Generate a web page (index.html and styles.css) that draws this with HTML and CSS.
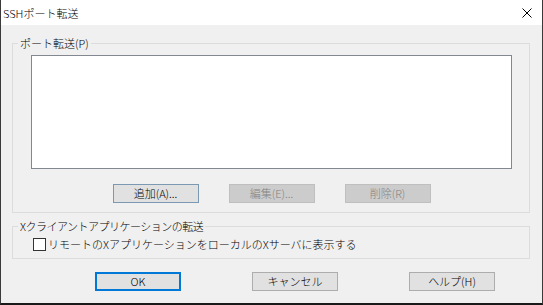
FILE: index.html
```html
<!DOCTYPE html>
<html lang="ja">
<head>
    <meta charset="UTF-8">
    <title>SSHポート転送</title>
    <link rel="stylesheet" href="styles.css">
</head>
<body>
    <div class="window">
        <div class="title-bar">
            <span class="title">SSHポート転送</span>
            <svg class="close" width="10" height="10" viewBox="0 0 10 10">
                <path d="M0.5 0.5 L9.5 9.5 M9.5 0.5 L0.5 9.5" stroke="#000" stroke-width="1" fill="none"/>
            </svg>
        </div>

        <div class="content">
            <div class="group forward-group">
                <span class="group-title">ポート転送(P)</span>
                <div class="list-box"></div>
                <div class="list-buttons">
                    <button class="button focused">追加(A)...</button>
                    <button class="button" disabled>編集(E)...</button>
                    <button class="button" disabled>削除(R)</button>
                </div>
            </div>

            <div class="group x-group">
                <span class="group-title">Xクライアントアプリケーションの転送</span>
                <label class="check-row">
                    <span class="check-box"></span>
                    <span class="check-text">リモートのXアプリケーションをローカルのXサーバに表示する</span>
                </label>
            </div>

            <div class="dialog-buttons">
                <button class="button default">OK</button>
                <button class="button">キャンセル</button>
                <button class="button">ヘルプ(H)</button>
            </div>
        </div>
    </div>
</body>
</html>
```

FILE: styles.css
```css
body {
    margin: 0;
    font-family: "Noto Sans CJK JP", "Noto Sans", sans-serif;
    font-size: 11px;
    font-weight: 300;
    color: #000;
    background-color: #f0f0f0;
}

.window {
    width: 543px;
    height: 305px;
    box-sizing: border-box;
    border-left: 1px solid #3a3a3a;
    border-right: 1px solid #3a3a3a;
    border-bottom: 2px solid #1a1a1a;
    background-color: #f0f0f0;
}

.title-bar {
    height: 25px;
    background-color: #fff;
    display: flex;
    align-items: center;
    justify-content: space-between;
    padding-left: 2px;
}

.title {
    font-size: 11px;
    line-height: 14px;
}

.close {
    margin-right: 10px;
    display: block;
}

.content {
    padding: 18px 12px 0 11px;
}

.group {
    position: relative;
    border: 1px solid #dcdcdc;
}

.group-title {
    position: absolute;
    top: -8px;
    left: 5px;
    padding: 0 2px;
    line-height: 14px;
    background-color: #f0f0f0;
}

.forward-group {
    padding: 11px 17px 9px 18px;
}

.list-box {
    height: 114px;
    box-sizing: border-box;
    border: 1px solid #828790;
    background-color: #fff;
}

.list-buttons {
    margin-top: 15px;
    display: flex;
    justify-content: center;
    gap: 30px;
}

.button {
    width: 86px;
    height: 19px;
    box-sizing: border-box;
    padding: 0;
    font-family: inherit;
    font-size: 11px;
    font-weight: 300;
    line-height: 15px;
    color: #000;
    background-color: #e1e1e1;
    border: 1px solid #adadad;
}

.button.focused {
    border-color: #7c99b4;
}

.button:disabled {
    color: #838383;
    background-color: #cccccc;
    border-color: #bfbfbf;
}

.button.default {
    border: 2px solid #0078d7;
}

.x-group {
    margin-top: 13px;
    padding: 11px 18px 7px 20px;
}

.x-group .group-title {
    letter-spacing: -0.5px;
}

.check-row {
    display: flex;
    align-items: center;
}

.check-box {
    width: 13px;
    height: 13px;
    box-sizing: border-box;
    border: 1px solid #333;
    background-color: #fff;
}

.check-text {
    margin-left: 2px;
    line-height: 13px;
}

.dialog-buttons {
    margin-top: 13px;
    padding-left: 83px;
    display: flex;
    gap: 71px;
}
```
